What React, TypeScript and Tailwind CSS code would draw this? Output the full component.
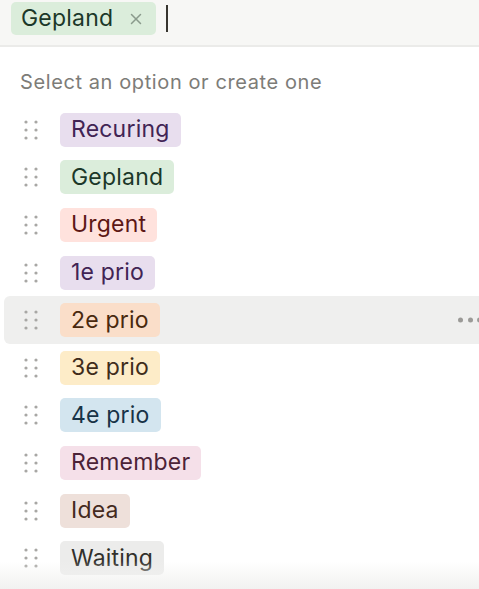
import { X } from "lucide-react";

const options = [
  { label: "Recuring", bg: "bg-[#e8deee]", fg: "text-[#412454]" },
  { label: "Gepland", bg: "bg-[#dbeddb]", fg: "text-[#1c3829]" },
  { label: "Urgent", bg: "bg-[#ffe2dd]", fg: "text-[#5d1715]" },
  { label: "1e prio", bg: "bg-[#e8deee]", fg: "text-[#412454]" },
  { label: "2e prio", bg: "bg-[#fadec9]", fg: "text-[#49290e]", active: true },
  { label: "3e prio", bg: "bg-[#fdecc8]", fg: "text-[#402c1b]" },
  { label: "4e prio", bg: "bg-[#d3e5ef]", fg: "text-[#183347]" },
  { label: "Remember", bg: "bg-[#f5e0e9]", fg: "text-[#4c2337]" },
  { label: "Idea", bg: "bg-[#eee0da]", fg: "text-[#442a1e]" },
  { label: "Waiting", bg: "bg-[#ececeb]", fg: "text-[#32302c]" },
];

function DragHandle() {
  return (
    <svg width="14" height="20" viewBox="0 0 14 20" className="shrink-0">
      {[2, 10, 18].map((y) =>
        [2, 12].map((x) => <circle key={`${x}-${y}`} cx={x} cy={y} r="1.6" fill="#a8a7a4" />)
      )}
    </svg>
  );
}

export default function App() {
  return (
    <div
      className="relative w-[479px] h-[589px] overflow-hidden bg-white"
      style={{ fontFamily: "Inter, 'Noto Sans', sans-serif" }}
    >
      {/* Input bar with selected tag */}
      <div className="h-[47px] bg-[#f7f7f5] border-b-2 border-[#ebebe9] flex items-start pt-[2px] pl-[11px]">
        <div className="h-[33px] flex items-center rounded-[5px] bg-[#dbeddb] text-[#1c3829] pl-[10px] pr-[11px] text-[23px] leading-none tracking-[0.2px]">
          <span>Gepland</span>
          <X size={18} strokeWidth={2} className="ml-[14px] text-[#8a9a8c]" />
        </div>
        <div className="ml-[10px] mt-[3px] w-[2px] h-[27px] bg-[#37352f]" />
      </div>

      {/* Hint */}
      <div className="pl-[20px] pt-[25px] h-[59px] text-[20px] leading-none text-[#7d7c78] tracking-[0.6px]">
        Select an option or create one
      </div>

      {/* Options */}
      <div className="flex flex-col pl-[4px]">
        {options.map((o) => (
          <div
            key={o.label}
            className={`relative h-[47.6px] flex items-center rounded-l-[6px] pl-[20px] ${
              o.active ? "bg-[#efefee]" : ""
            }`}
          >
            <DragHandle />
            <div
              className={`ml-[22px] h-[34px] flex items-center rounded-[5px] px-[11px] text-[23px] leading-none tracking-[0.2px] ${o.bg} ${o.fg}`}
            >
              {o.label}
            </div>
            {o.active && (
              <div className="absolute right-[-3px] top-1/2 -translate-y-1/2 flex gap-[4.5px]">
                {[0, 1, 2].map((i) => (
                  <span key={i} className="w-[5px] h-[5px] rounded-full bg-[#9b9a97]" />
                ))}
              </div>
            )}
          </div>
        ))}
      </div>

      {/* bottom fade */}
      <div className="absolute bottom-0 left-0 right-0 h-[28px] bg-gradient-to-b from-white/0 to-[#f1f1f0]" />
    </div>
  );
}
